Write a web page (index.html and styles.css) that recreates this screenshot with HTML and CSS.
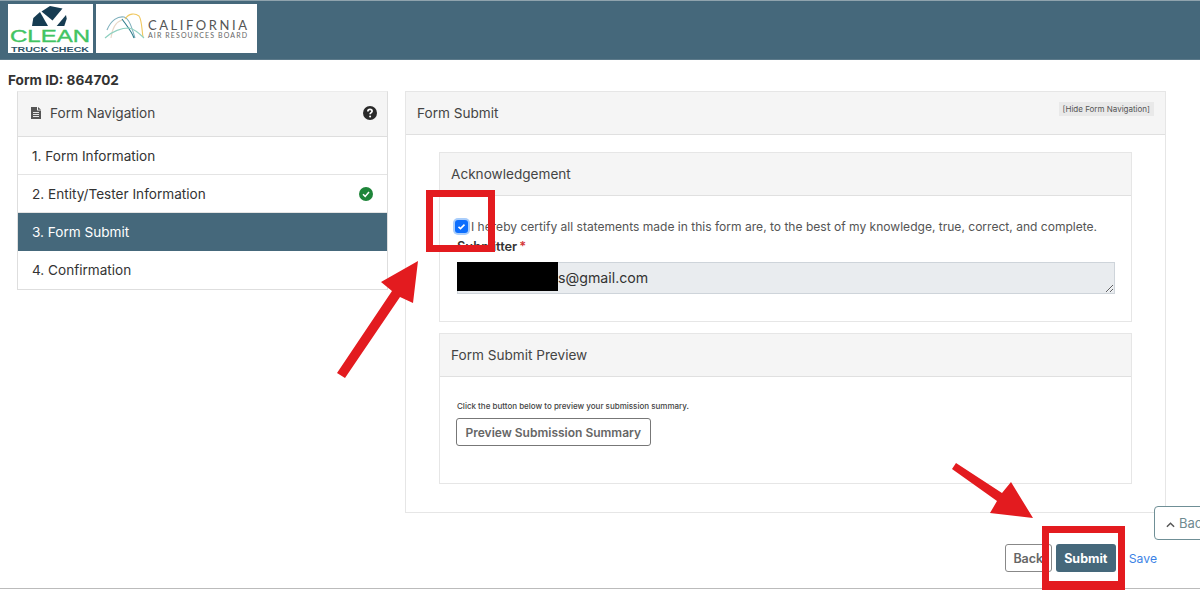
FILE: index.html
```html
<!DOCTYPE html>
<html lang="en">
<head>
<meta charset="utf-8">
<title>Form Submit</title>
<link rel="stylesheet" href="styles.css">
</head>
<body>
<header class="topbar">
  <div class="logo logo-clean">
    <svg width="85" height="49" viewBox="0 0 85 49">
      <path class="mark" d="M24 22 L25.3 14 L32 8 L40 22 Z"/>
      <path class="mark" d="M33.5 7.5 L42 2 L54.5 4.5 L44.5 16.5 Z"/>
      <path class="mark" d="M58.7 14.7 L56.3 22 L48.7 22 L58 11 Z"/>
      <text class="clean-word" x="2" y="38" textLength="80" lengthAdjust="spacingAndGlyphs">CLEAN</text>
      <text class="truck-word" x="3" y="48" textLength="78" lengthAdjust="spacingAndGlyphs">TRUCK CHECK</text>
    </svg>
  </div>
  <div class="logo logo-carb">
    <svg width="161" height="49" viewBox="0 0 161 49">
      <path class="arc arc-d" d="M15 34 C16 25 20 18 26 16"/>
      <path class="arc arc-a" d="M11 26 C15 16 22 12 28 13 C33 14 36 24 39 34"/>
      <path class="arc arc-e" d="M29 15 C33 9 39 9 43 12 C46 16 46 28 47 33"/>
      <path class="arc arc-b" d="M26 15 C31 22 36 28 38 34"/>
      <path class="arc arc-c" d="M9 34 C16 27 26 24 33 24 C39 25 44 30 48 34"/>
      <text class="carb-title" x="52" y="26" textLength="99" lengthAdjust="spacing">CALIFORNIA</text>
      <text class="carb-sub" x="52" y="34" textLength="99" lengthAdjust="spacing">AIR RESOURCES BOARD</text>
    </svg>
  </div>
</header>

<div class="form-id">Form ID: 864702</div>

<div class="layout">
  <nav class="nav-card">
    <div class="nav-head">
      <svg class="doc-icon" viewBox="0 0 10 12" width="10" height="12"><path d="M0 0H6V3.5H10V12H0Z M7 0L10 2.7H7Z"/><path class="doc-lines" d="M2 5.5H8M2 7.5H8M2 9.5H8"/></svg>
      <span class="nav-title">Form Navigation</span>
      <svg class="help-icon" viewBox="0 0 14 14" width="14" height="14"><circle cx="7" cy="7" r="7"/><path class="help-q" d="M4.9 5.4C4.9 4 5.9 3.4 7 3.4C8.2 3.4 9.1 4.1 9.1 5.2C9.1 6.6 7.1 6.6 7.1 8.2"/><circle class="help-dot" cx="7.1" cy="10.4" r="1"/></svg>
    </div>
    <div class="nav-item">1. Form Information</div>
    <div class="nav-item">
      <span>2. Entity/Tester Information</span>
      <svg class="ok-icon" viewBox="0 0 14 14" width="14" height="14"><circle cx="7" cy="7" r="7"/><path d="M4 7.2L6.2 9.4L10 5"/></svg>
    </div>
    <div class="nav-item nav-active">3. Form Submit</div>
    <div class="nav-item nav-last">4. Confirmation</div>
  </nav>

  <div class="main-column">
    <main class="main-card">
      <div class="main-head">
        <span>Form Submit</span>
        <span class="hide-nav">[Hide Form Navigation]</span>
      </div>
      <div class="main-body">
        <section class="card">
          <div class="card-head">Acknowledgement</div>
          <div class="card-body ack-body">
            <label class="certify">
              <span class="checkbox"><svg viewBox="0 0 13 13" width="13" height="13"><path d="M3.5 6.8L5.5 8.6L9.5 4.6"/></svg></span>
              <span class="certify-text">I hereby certify all statements made in this form are, to the best of my knowledge, true, correct, and complete.</span>
            </label>
            <div class="field-label">Submitter<span class="req">*</span></div>
            <textarea class="email" readonly rows="1">s@gmail.com</textarea>
          </div>
        </section>
        <section class="card">
          <div class="card-head">Form Submit Preview</div>
          <div class="card-body preview-body">
            <p class="hint">Click the button below to preview your submission summary.</p>
            <button class="btn btn-preview" type="button">Preview Submission Summary</button>
          </div>
        </section>
      </div>
    </main>
    <div class="actions">
      <button class="btn btn-back" type="button">Back</button>
      <button class="btn btn-submit" type="button">Submit</button>
      <a class="save" href="#">Save</a>
    </div>
  </div>
</div>
<div class="bottom-rule"></div>

<button class="to-top" type="button"><svg viewBox="0 0 10 6" width="9" height="6"><path d="M1 5L5 1L9 5"/></svg>Back to Top</button>

<div class="redaction"></div>
<div class="callout callout-check"></div>
<div class="callout callout-submit"></div>
<svg class="arrows" width="1200" height="590" viewBox="0 0 1200 590">
  <polygon points="337,373 345,378 400,297 413,303 418,261 381,282 392,291"/>
  <polygon points="956,463 952,469 997,501 990,513 1033,518 1011,482 1002,493"/>
</svg>
</body>
</html>
```
FILE: styles.css
```css
* { box-sizing: border-box; }
html, body { margin: 0; height: 590px; overflow: hidden; }
body {
  position: relative;
  background: #fff;
  color: #333;
  font-family: Inter, "Liberation Sans", sans-serif;
  font-size: 13.6px;
}
.topbar {
  height: 60px;
  padding: 4px 8px;
  display: flex;
  gap: 3px;
  background: #45687b;
  border-top: 1px solid #8fa3ad;
  border-bottom: 1px solid #5d7a8a;
  align-items: flex-start;
}
.logo { background: #fff; height: 49px; margin-top: -1px; }
.logo svg { display: block; }
.logo-clean { width: 85px; }
.logo-carb { width: 161px; }
.mark { fill: #163c52; }
.clean-word { font: 400 16px "Liberation Sans", sans-serif; fill: #41c462; stroke: #41c462; stroke-width: .35; }
.truck-word { font: 700 7.5px "Liberation Sans", sans-serif; fill: #2d5468; }
.arc { fill: none; stroke-width: 1.1; }
.arc-a { stroke: #7fb0bd; }
.arc-b { stroke: #2e7d8c; }
.arc-c { stroke: #8fd0c0; }
.arc-d { stroke: #e8d8c8; }
.arc-e { stroke: #f0c860; }
.carb-title { font: 400 13px Lato, sans-serif; fill: #555; }
.carb-sub { font: 400 7px Lato, sans-serif; fill: #666; }

.form-id {
  padding: 10px 0 1px 8px;
  line-height: 20px;
  font-weight: 700;
  font-size: 13.6px;
  color: #333;
}
.layout { display: flex; gap: 17px; padding-left: 17px; align-items: flex-start; }
.nav-card { width: 371px; border: 1px solid #dedede; border-top-color: #ececec; }
.nav-head {
  height: 45px;
  display: flex;
  align-items: center;
  padding: 0 10px 3px 13px;
  background: #f5f5f5;
  border-bottom: 1px solid #dedede;
  color: #444;
}
.nav-title { margin-left: 9px; flex: 1; }
.doc-icon { fill: #555; }
.doc-lines { stroke: #f5f5f5; stroke-width: .9; fill: none; }
.help-icon { fill: #2a2a2a; }
.help-q { fill: none; stroke: #fff; stroke-width: 1.7; }
.help-dot { fill: #fff; }
.nav-item {
  height: 38px;
  display: flex;
  align-items: center;
  justify-content: space-between;
  padding: 0 14px;
  border-bottom: 1px solid #e4e4e4;
  color: #333;
}
.nav-last { border-bottom: 0; }
.nav-active { background: #45687b; color: #fff; border-bottom: 0; }
.ok-icon { fill: #1e8539; }
.ok-icon path { fill: none; stroke: #fff; stroke-width: 1.5; }

.main-column { width: 761px; }
.main-card { border: 1px solid #e6e6e6; height: 422px; }
.main-head {
  height: 43px;
  display: flex;
  align-items: flex-start;
  justify-content: space-between;
  padding: 13px 11px 0 11px;
  background: #f5f5f5;
  border-bottom: 1px solid #e0e0e0;
  color: #444;
}
.hide-nav {
  margin-top: -3px;
  font-size: 8px;
  line-height: 14px;
  padding: 0 4px;
  background: #e9e9e9;
  color: #555;
}
.main-body {
  padding: 17px 33px 0;
  display: flex;
  flex-direction: column;
  gap: 11px;
}
.card { border: 1px solid #e6e6e6; }
.card-head {
  height: 43px;
  display: flex;
  align-items: center;
  padding: 0 11px 1px;
  background: #f5f5f5;
  border-bottom: 1px solid #e0e0e0;
  color: #444;
}
.card-body { padding: 0 16px 0 17px; }
.ack-body { height: 125px; padding-top: 23px; }
.certify { display: flex; align-items: center; gap: 3px; margin-left: -2px; font-size: 12.06px; line-height: 14px; color: #555; white-space: nowrap; }
.certify-text { padding-top: 1px; }
.checkbox {
  width: 13px;
  height: 13px;
  border-radius: 3px;
  background: #0d6efd;
  box-shadow: 0 0 0 2px #a9cdfb;
  flex: none;
}
.checkbox svg { display: block; fill: none; stroke: #fff; stroke-width: 1.6; }
.field-label { margin-top: 5px; line-height: 16px; font-size: 12.8px; font-weight: 600; color: #333; }
.req { color: #d43a3a; margin-left: 2px; }
.email {
  display: block;
  width: 100%;
  height: 32px;
  margin-top: 7px;
  padding: 5px 12px 0 100px;
  border: 1px solid #ced4da;
  background: #e9ecef;
  color: #333;
  font: 400 14.2px/20px Inter, sans-serif;
  resize: vertical;
  overflow: hidden;
  outline: 0;
}
.preview-body { height: 106px; padding-top: 23px; }
.hint { margin: 0 0 6px; font-size: 8px; line-height: 12px; font-weight: 500; color: #444; }
.btn {
  font-family: inherit;
  border-radius: 3px;
  cursor: pointer;
}
.btn-preview {
  height: 28px;
  padding: 0 8.5px;
  margin-left: -1px;
  border: 1px solid #777;
  background: #fff;
  color: #666;
  font-size: 12px;
  font-weight: 600;
}
.actions {
  display: flex;
  align-items: center;
  justify-content: flex-end;
  margin-top: 31px;
  padding-right: 9px;
}
.btn-back {
  width: 47px;
  height: 28px;
  padding: 0;
  border: 1px solid #888;
  background: #fff;
  color: #666;
  font-size: 12.5px;
  font-weight: 600;
}
.btn-submit {
  width: 60px;
  height: 28px;
  margin-left: 4px;
  padding: 0;
  border: 0;
  background: #45687b;
  color: #fff;
  font-size: 12.5px;
  font-weight: 700;
}
.save { margin-left: 13px; color: #3b82e6; font-size: 12.2px; text-decoration: none; }
.bottom-rule { margin-top: 16px; border-top: 1px solid #bbb; }

.to-top {
  position: absolute;
  left: 1154px;
  top: 506px;
  width: 90px;
  height: 34px;
  padding: 0 0 0 11px;
  border: 1px solid #6f8f96;
  border-radius: 4px;
  background: #fff;
  color: #6f8a90;
  font: 400 13px Inter, sans-serif;
  text-align: left;
  white-space: nowrap;
}
.to-top svg { fill: none; stroke: #555; stroke-width: 1.6; margin-right: 4px; }
.redaction { position: absolute; left: 457px; top: 262px; width: 101px; height: 29px; background: #000; }
.callout { position: absolute; border: 7.5px solid #e31b1f; }
.callout-check { left: 426px; top: 190px; width: 69px; height: 62px; }
.callout-submit { left: 1042px; top: 526px; width: 83px; height: 64px; border-bottom-width: 9px; }
.arrows { position: absolute; left: 0; top: 0; pointer-events: none; }
.arrows polygon { fill: #e31b1f; }
```
